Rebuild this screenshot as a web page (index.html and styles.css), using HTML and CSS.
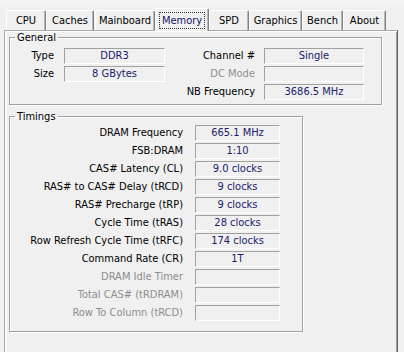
FILE: index.html
```html
<!DOCTYPE html>
<html>
<head>
<title>CPU-Z Memory</title>
<link rel="stylesheet" href="styles.css">
</head>
<body>
  <div class="window">
    <div class="tabs">
      <div class="tab t-cpu">CPU</div>
      <div class="tab t-caches">Caches</div>
      <div class="tab t-mainboard">Mainboard</div>
      <div class="tab t-memory active"><span class="focus">Memory</span></div>
      <div class="tab t-spd">SPD</div>
      <div class="tab t-graphics">Graphics</div>
      <div class="tab t-bench">Bench</div>
      <div class="tab t-about">About</div>
    </div>

    <div class="panel">
      <fieldset class="group general">
        <legend>General</legend>
        <div class="general-grid">
          <span class="label">Type</span>
          <span class="value">DDR3</span>
          <span class="label">Channel #</span>
          <span class="value">Single</span>

          <span class="label">Size</span>
          <span class="value">8 GBytes</span>
          <span class="label off">DC Mode</span>
          <span class="value"></span>

          <span></span>
          <span></span>
          <span class="label">NB Frequency</span>
          <span class="value">3686.5 MHz</span>
        </div>
      </fieldset>

      <fieldset class="group timings">
        <legend>Timings</legend>
        <div class="timing-grid">
          <span class="label">DRAM Frequency</span><span class="value">665.1 MHz</span>
          <span class="label">FSB:DRAM</span><span class="value">1:10</span>
          <span class="label">CAS# Latency (CL)</span><span class="value">9.0 clocks</span>
          <span class="label">RAS# to CAS# Delay (tRCD)</span><span class="value">9 clocks</span>
          <span class="label">RAS# Precharge (tRP)</span><span class="value">9 clocks</span>
          <span class="label">Cycle Time (tRAS)</span><span class="value">28 clocks</span>
          <span class="label">Row Refresh Cycle Time (tRFC)</span><span class="value">174 clocks</span>
          <span class="label">Command Rate (CR)</span><span class="value">1T</span>
          <span class="label off">DRAM Idle Timer</span><span class="value"></span>
          <span class="label off">Total CAS# (tRDRAM)</span><span class="value"></span>
          <span class="label off">Row To Column (tRCD)</span><span class="value"></span>
        </div>
      </fieldset>
    </div>
  </div>
</body>
</html>
```

FILE: styles.css
```css
body {
  margin: 0;
  font-family: "DejaVu Sans Condensed", "Liberation Sans", sans-serif;
  font-size: 11px;
  color: #000000;
  background-color: #f0f0f0;
  overflow: hidden;
}
.window {
  width: 404px;
  height: 352px;
  padding: 8px 0 0 4px;
  box-sizing: border-box;
  background: linear-gradient(#f7f7f7, #f0f0f0 9px);
}
.tabs {
  display: flex;
  align-items: flex-end;
  height: 22px;
  padding-left: 2px;
}
.tab {
  height: 20px;
  line-height: 19px;
  text-align: center;
  box-sizing: border-box;
  border-top: 1px solid #ffffff;
  border-left: 1px solid #ffffff;
  border-right: 1px solid #808080;
  border-radius: 2px 2px 0 0;
  box-shadow: inset -1px 0 0 #b8b8b8;
}
.t-cpu { width: 40px; }
.t-caches { width: 48px; }
.t-mainboard { width: 60px; margin-left: 1px; }
.t-memory { width: 54px; }
.t-spd { width: 40px; }
.t-graphics { width: 53px; }
.t-bench { width: 41px; }
.t-about { width: 43px; }
.tab.active {
  height: 23px;
  line-height: 21px;
  margin-bottom: -1px;
  position: relative;
  background-color: #f0f0f0;
  color: #14146a;
  padding-top: 1px;
}
.focus {
  display: inline-block;
  line-height: 13px;
  padding: 1px 2px;
  outline: 1px dotted #303030;
}
.panel {
  height: 330px;
  margin-right: 6px;
  border-top: 1px solid #a8a8a8;
  border-left: 1px solid #a8a8a8;
  border-right: 1px solid #606060;
  box-shadow: inset 1px 1px 0 #ffffff, inset -1px 0 0 #a0a0a0;
  padding: 0 0 0 4px;
}
.group {
  margin: 0;
  padding: 0;
  min-width: 0;
  border: 1px solid #a0a0a0;
  box-shadow: inset 1px 1px 0 #ffffff, 1px 1px 0 #ffffff;
}
.group legend {
  margin-left: 5px;
  padding: 0 2px;
  line-height: 13px;
}
.general {
  width: 373px;
  box-sizing: border-box;
  padding: 4px 0 4px 0;
}
.timings {
  width: 294px;
  box-sizing: border-box;
  margin-top: 5px;
  padding: 2px 0 10px 0;
}
.general-grid {
  display: grid;
  grid-template-columns: 44px 102px 81px 100px;
  grid-auto-rows: 16px;
  column-gap: 9px;
  row-gap: 2px;
}
.general-grid .value:nth-child(2),
.general-grid .value:nth-child(6) {
  margin-left: 1px;
}
.timing-grid {
  display: grid;
  grid-template-columns: 173px 85px;
  grid-auto-rows: 16px;
  column-gap: 12px;
  row-gap: 2px;
}
.label {
  text-align: right;
  line-height: 16px;
  white-space: nowrap;
}
.label.off {
  color: #8e8e8e;
}
.value {
  box-sizing: border-box;
  border-top: 1px solid #a0a0a0;
  border-left: 1px solid #a0a0a0;
  border-bottom: 1px solid #ffffff;
  border-right: 1px solid #ffffff;
  text-align: center;
  line-height: 14px;
  color: #1a1a6e;
  white-space: nowrap;
}
```
